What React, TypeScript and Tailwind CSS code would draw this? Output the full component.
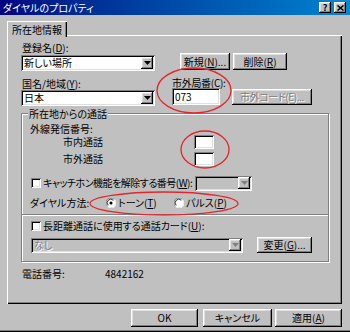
import React from "react";

const raised =
  "bg-[#c0c0c0] shadow-[inset_-1px_-1px_#000,inset_1px_1px_#fff,inset_-2px_-2px_#808080,inset_2px_2px_#dfdfdf]";
const sunken =
  "shadow-[inset_1px_1px_#808080,inset_-1px_-1px_#fff,inset_2px_2px_#000,inset_-2px_-2px_#dfdfdf]";
const disabledText = "text-[#808080] [text-shadow:1px_1px_0_#fff]";

function Arrow({ disabled }: { disabled?: boolean }) {
  return (
    <div className={`${raised} w-[12px] h-[12px] flex items-center justify-center shrink-0`}>
      <svg width="7" height="4" viewBox="0 0 7 4">
        <polygon points="0,0 7,0 3.5,4" fill={disabled ? "#808080" : "#000"} />
      </svg>
    </div>
  );
}

function Btn({
  className,
  children,
  disabled,
}: {
  className: string;
  children: React.ReactNode;
  disabled?: boolean;
}) {
  return (
    <div
      className={`${raised} ${className} flex items-center justify-center whitespace-nowrap text-[10px] ${
        disabled ? disabledText : "text-black"
      }`}
    >
      {children}
    </div>
  );
}

function Check() {
  return <div className={`${sunken} bg-white w-[10px] h-[10px] shrink-0`} />;
}

function Radio({ checked }: { checked?: boolean }) {
  return (
    <svg width="10" height="10" viewBox="0 0 12 12" className="shrink-0">
      <circle cx="6" cy="6" r="5.5" fill="#fff" />
      <path d="M1.6 9.9 A5.5 5.5 0 0 1 9.9 1.6" stroke="#808080" strokeWidth="1" fill="none" />
      <path d="M2.7 8.8 A4.2 4.2 0 0 1 8.8 2.7" stroke="#000" strokeWidth="1" fill="none" />
      <path d="M10.4 2.1 A5.5 5.5 0 0 1 2.1 10.4" stroke="#fff" strokeWidth="1" fill="none" />
      {checked && <circle cx="6" cy="6" r="1.8" fill="#000" />}
    </svg>
  );
}

const U = ({ c }: { c: string }) => <span className="underline">{c}</span>;

export default function App() {
  return (
    <div className="w-[350px] h-[332px] bg-[#c0c0c0] flex flex-col overflow-hidden relative text-black text-[10px] leading-none font-['Noto_Sans_CJK_JP','Noto_Sans',sans-serif] [font-feature-settings:'palt']">
      {/* Title bar */}
      <div className="h-[15px] shrink-0 flex items-center bg-linear-to-r from-[#000080] to-[#1084d0] pl-[3px] pr-[4px]">
        <span className="flex-1 text-white text-[10px] leading-none">ダイヤルのプロパティ</span>
        <div className={`${raised} w-[12px] h-[11px] flex items-center justify-center text-[9px] font-bold leading-none`}>
          ?
        </div>
        <div className={`${raised} w-[12px] h-[11px] ml-[3px] flex items-center justify-center`}>
          <svg width="7" height="6" viewBox="0 0 7 6">
            <path d="M0.5 0.5 L6.5 5.5 M6.5 0.5 L0.5 5.5" stroke="#000" strokeWidth="1.5" />
          </svg>
        </div>
      </div>

      {/* Body */}
      <div className="flex-1 flex flex-col pl-[7px] pr-[8px]">
        {/* Tab strip */}
        <div className="mt-[6px] flex">
          <div className="relative z-10 w-[60px] h-[16px] bg-[#c0c0c0] shadow-[inset_1px_1px_#fff,inset_-1px_0_#000,inset_-2px_0_#808080] flex justify-center pt-[3px]">
            <span className="leading-[11px]">所在地情報</span>
          </div>
        </div>

        {/* Panel */}
        <div className="-mt-[2px] w-[335px] h-[269px] shrink-0 shadow-[inset_1px_1px_#fff,inset_-1px_-1px_#000,inset_-2px_-2px_#808080] pl-[14px] pt-[7px] flex flex-col">
          {/* Row A */}
          <div className="flex">
            <div className="w-[134px] flex flex-col">
              <div className="h-[11px] leading-[11px] pl-[1px]">
                登録名(<U c="D" />):
              </div>
              <div className={`${sunken} bg-white mt-[2px] h-[16px] flex items-center pl-[3px] pr-[2px]`}>
                <span className="flex-1 leading-none">新しい場所</span>
                <Arrow />
              </div>
            </div>
            <Btn className="ml-[25px] mt-[11px] w-[50px] h-[17px]">
              <span>
                新規(<U c="N" />)...
              </span>
            </Btn>
            <Btn className="ml-[3px] mt-[11px] w-[54px] h-[17px]">
              <span>
                削除(<U c="R" />)
              </span>
            </Btn>
          </div>

          {/* Row B */}
          <div className="flex mt-[7px]">
            <div className="w-[134px] flex flex-col">
              <div className="h-[11px] leading-[11px] pl-[1px]">
                国名/地域(<U c="Y" />):
              </div>
              <div className={`${sunken} bg-white mt-[1px] h-[16px] flex items-center pl-[3px] pr-[2px]`}>
                <span className="flex-1 leading-none">日本</span>
                <Arrow />
              </div>
            </div>
            <div className="ml-[17px] w-[48px] flex flex-col">
              <div className="h-[10px] leading-[10px] whitespace-nowrap tracking-[-0.3px]">
                市外局番(<U c="C" />):
              </div>
              <div className={`${sunken} bg-white h-[17px] flex items-center pl-[3px]`}>
                <span className="leading-none">073</span>
              </div>
            </div>
            <Btn disabled className="ml-[12px] mt-[11px] w-[80px] h-[16px]">
              <span className="tracking-[-0.4px]">市外コード(E)...</span>
            </Btn>
          </div>

          {/* Group box */}
          <div className="relative mt-[7px] w-[308px] h-[149px] shrink-0 border border-[#808080] shadow-[1px_1px_0_#fff,inset_1px_1px_0_#fff] pl-[9px] pt-[10px] flex flex-col">
            <span className="absolute left-[6px] -top-[6px] bg-[#c0c0c0] px-[1px] leading-[11px]">
              所在地からの通話
            </span>
            <div className="h-[10px] leading-[10px] -ml-[1px]">外線発信番号:</div>
            <div className="flex items-center h-[14px] mt-[1px]">
              <span className="ml-[32px] w-[131px]">市内通話</span>
              <div className={`${sunken} bg-white w-[20px] h-[14px]`} />
            </div>
            <div className="flex items-center h-[14px] mt-[3px]">
              <span className="ml-[32px] w-[131px]">市外通話</span>
              <div className={`${sunken} bg-white w-[20px] h-[14px]`} />
            </div>
            <div className="flex items-center h-[16px] mt-[9px]">
              <div className="w-[164px] flex items-center">
                <Check />
                <span className="ml-[2px] whitespace-nowrap tracking-[-0.5px]">
                  キャッチホン機能を解除する番号(<U c="W" />):
                </span>
              </div>
              <div className={`${sunken} bg-[#c0c0c0] w-[57px] h-[15px] flex items-center justify-end pr-[2px]`}>
                <Arrow disabled />
              </div>
            </div>
            <div className="flex items-center h-[14px] mt-[5px]">
              <span className="w-[75px] -ml-[1px]">ダイヤル方法:</span>
              <div className="w-[68px] flex items-center ml-[1px]">
                <Radio checked />
                <span className="ml-[2px]">
                  トーン(<U c="T" />)
                </span>
              </div>
              <div className="flex items-center">
                <Radio />
                <span className="ml-[2px]">
                  パルス(<U c="P" />)
                </span>
              </div>
            </div>
            <div className="-ml-[9px] w-[306px] h-[2px] mt-[4px] border-t border-[#808080] border-b border-b-white" />
            <div className="flex items-center h-[12px] mt-[4px]">
              <Check />
              <span className="ml-[2px] whitespace-nowrap">
                長距離通話に使用する通話カード(<U c="U" />):
              </span>
            </div>
            <div className="flex items-center h-[16px] mt-[5px]">
              <div className={`${sunken} bg-[#c0c0c0] w-[212px] h-[15px] flex items-center pl-[3px] pr-[2px]`}>
                <span className={`flex-1 leading-none ${disabledText}`}>なし</span>
                <Arrow disabled />
              </div>
              <Btn className="ml-[14px] w-[55px] h-[16px]">
                <span>
                  変更(<U c="G" />)...
                </span>
              </Btn>
            </div>
          </div>

          {/* Phone number */}
          <div className="flex mt-[6px] h-[11px] leading-[11px]">
            <span className="ml-[1px] w-[83px]">電話番号:</span>
            <span>4842162</span>
          </div>
        </div>

        {/* Footer buttons */}
        <div className="mt-[5px] flex justify-end">
          <Btn className="w-[67px] h-[18px]">
            <span>OK</span>
          </Btn>
          <Btn className="ml-[5px] w-[69px] h-[18px]">
            <span>キャンセル</span>
          </Btn>
          <Btn className="ml-[3px] w-[67px] h-[18px]">
            <span>
              適用(<U c="A" />)
            </span>
          </Btn>
        </div>
      </div>
      <div className="h-[1px] shrink-0 bg-[#808080]" />
      <div className="h-[1px] shrink-0 bg-black" />

      {/* Red annotation ellipses */}
      <svg className="absolute left-0 top-0 pointer-events-none" width="350" height="332" viewBox="0 0 350 332">
        <ellipse cx="194" cy="90.5" rx="37" ry="22.5" fill="none" stroke="#e8232a" strokeWidth="1.3" />
        <ellipse cx="205" cy="149.5" rx="24" ry="18.5" fill="none" stroke="#e8232a" strokeWidth="1.3" />
        <ellipse cx="164" cy="203.5" rx="74" ry="11.5" fill="none" stroke="#e8232a" strokeWidth="1.3" />
      </svg>
    </div>
  );
}
